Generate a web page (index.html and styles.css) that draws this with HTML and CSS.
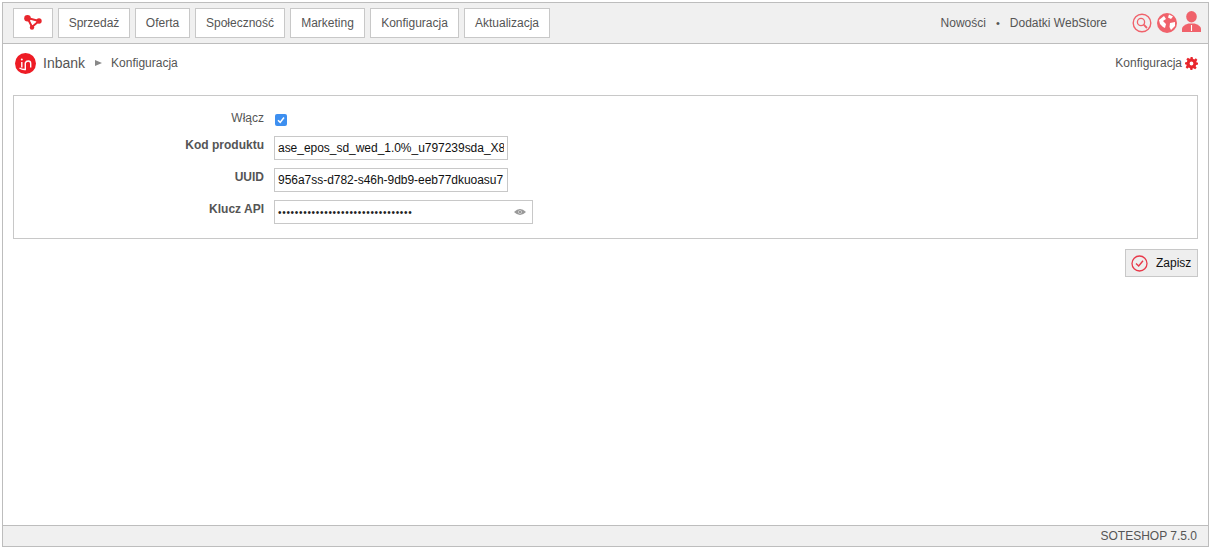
FILE: index.html
```html
<!DOCTYPE html>
<html lang="pl">
<head>
<meta charset="utf-8">
<title>Inbank - Konfiguracja</title>
<link rel="stylesheet" href="styles.css">
</head>
<body>
<div class="frame">
  <header class="topbar">
    <nav class="nav">
      <a class="nav-btn nav-logo">
        <svg width="20" height="16" viewBox="0 0 20 16"><path d="M4.500 3 L16 6 L9 12 Z" fill="none" stroke="#e8262d" stroke-width="2"/><circle cx="4.500" cy="3.300" r="3.300" fill="#e8262d"/><circle cx="16" cy="6" r="2.700" fill="#e8262d"/><circle cx="9" cy="12.500" r="2.200" fill="#e8262d"/></svg>
      </a>
      <a class="nav-btn w72">Sprzedaż</a>
      <a class="nav-btn w55">Oferta</a>
      <a class="nav-btn w90">Społeczność</a>
      <a class="nav-btn w75">Marketing</a>
      <a class="nav-btn w89">Konfiguracja</a>
      <a class="nav-btn w86">Aktualizacja</a>
    </nav>
    <div class="top-right">
      <span>Nowości</span><span class="dot">•</span><span>Dodatki WebStore</span>
      <div class="top-icons">
        <svg width="20" height="20" viewBox="0 0 20 20"><circle cx="10" cy="10" r="8.800" fill="none" stroke="#f0626b" stroke-width="1.400"/><circle cx="9" cy="9" r="3.600" fill="none" stroke="#f0626b" stroke-width="1.300"/><path d="M11.700 11.700 L15 15" stroke="#f0626b" stroke-width="1.800"/></svg>
        <svg width="20" height="20" viewBox="0 0 20 20"><circle cx="10" cy="10" r="10" fill="#f0626b"/><path d="M2 7 L7 3 L9 6 L6 8 L9 11 L8 15 L6 14 L3 11 Z M12 1.500 L16 3.500 L14 6 L11 4.500 Z M13 10 L18 9 L18 13 L14 17 L12.500 14 Z" fill="#fff"/></svg>
        <svg class="person" width="19" height="21" viewBox="0 0 19 21"><ellipse cx="9.500" cy="5.700" rx="5.300" ry="5.700" fill="#f0626b"/><path d="M0 21 L0 17.500 Q0.500 14.500 6.500 12.500 L12.500 12.500 Q18.500 14.500 19 17.500 L19 21 Z" fill="#f0626b"/><path d="M9.500 14 L9.500 20" stroke="#fff" stroke-width="1.100"/></svg>
      </div>
    </div>
  </header>

  <div class="crumbs">
    <div class="crumbs-left">
      <svg class="in-logo" width="21" height="21" viewBox="0 0 21 21"><circle cx="10.500" cy="10.500" r="10.500" fill="#ee1c25"/><path d="M6.800 9 V14.500 M4.500 15 Q7 16.800 10.300 16.500 V9.500 M10.300 10 Q11 8 13.200 8 Q15.700 8 15.700 10.500 V14.500" fill="none" stroke="#fff" stroke-width="1.400"/><circle cx="6.800" cy="6.500" r="1" fill="#fff"/></svg>
      <span class="crumb-title">Inbank</span>
      <span class="crumb-arrow"></span>
      <span class="crumb-sub">Konfiguracja</span>
    </div>
    <div class="crumbs-right">
      <span>Konfiguracja</span>
      <svg width="13" height="13" viewBox="0 0 24 24"><path fill="#e8262d" fill-rule="evenodd" d="M10 0h4l.7 3.400 2.400 1 2.900-1.900 2.800 2.800-1.900 2.900 1 2.400L24 10v4l-3.400.7-1 2.400 1.900 2.900-2.800 2.800-2.900-1.900-2.400 1L14 24h-4l-.7-3.400-2.400-1-2.900 1.900-2.800-2.800 1.900-2.900-1-2.400L0 14v-4l3.400-.7 1-2.400-1.900-2.900 2.800-2.800 2.900 1.900 2.400-1zM12 8.500a3.500 3.500 0 1 0 0 7 3.500 3.500 0 0 0 0-7z"/></svg>
    </div>
  </div>

  <main class="content">
    <form class="panel">
      <div class="row row-check">
        <label class="lbl lbl-plain">Włącz</label>
        <span class="check"><svg width="8" height="8" viewBox="0 0 8 8"><path d="M1 4.200 L3.200 6.400 L7 1.500" fill="none" stroke="#fff" stroke-width="1.500"/></svg></span>
      </div>
      <div class="row">
        <label class="lbl">Kod produktu</label>
        <input class="field" type="text" value="ase_epos_sd_wed_1.0%_u797239sda_X8">
      </div>
      <div class="row">
        <label class="lbl">UUID</label>
        <input class="field" type="text" value="956a7ss-d782-s46h-9db9-eeb77dkuoasu7">
      </div>
      <div class="row">
        <label class="lbl">Klucz API</label>
        <div class="field field-pass">
          <span class="dots">••••••••••••••••••••••••••••••••</span>
          <svg width="12" height="8" viewBox="0 0 12 8"><path d="M0 4 Q6 -2 12 4 Q6 10 0 4 Z" fill="#999"/><circle cx="6" cy="4" r="1.800" fill="#e4e4e4"/><circle cx="6" cy="4" r="1.100" fill="#888"/></svg>
        </div>
      </div>
    </form>
    <div class="actions">
      <button class="save" type="button">
        <svg width="17" height="17" viewBox="0 0 17 17"><circle cx="8.500" cy="8.500" r="7.500" fill="none" stroke="#e8394a" stroke-width="1.300"/><path d="M5 8.500 L7.700 11 L12 5.700" fill="none" stroke="#e8394a" stroke-width="1.400"/></svg>
        <span>Zapisz</span>
      </button>
    </div>
  </main>

  <footer class="footer">SOTESHOP 7.5.0</footer>
</div>
</body>
</html>
```

FILE: styles.css
```css
* { box-sizing: border-box; }
html, body { margin: 0; height: 100%; background: #fff; }
body {
  padding: 2px 2px 3px 2px;
  font-family: "Liberation Sans", Arial, sans-serif;
  font-size: 12px;
  color: #555;
}
.frame {
  height: 545px;
  border: 1px solid #bdbdbd;
  display: flex;
  flex-direction: column;
  background: #fff;
}
.topbar {
  height: 41px;
  flex: none;
  background: #f0f0f0;
  border-bottom: 1px solid #bdbdbd;
  display: flex;
  align-items: center;
  justify-content: space-between;
  padding: 0 7px 0 10px;
}
.nav { display: flex; gap: 5px; }
.nav-btn {
  height: 30px;
  background: #fff;
  border: 1px solid #c8c8c8;
  display: flex;
  align-items: center;
  justify-content: center;
  color: #555;
}
.nav-logo { width: 40px; }
.w72 { width: 72px; }
.w55 { width: 55px; }
.w90 { width: 90px; }
.w89 { width: 89px; }
.w75 { width: 75px; }
.w86 { width: 86px; }
.top-right { display: flex; align-items: center; color: #555; }
.dot { margin: 0 10px; font-size: 11px; }
.top-icons { display: flex; align-items: center; gap: 5px; margin-left: 25px; }
.person { margin-top: -4px; }
.crumbs {
  height: 38px;
  flex: none;
  display: flex;
  align-items: center;
  justify-content: space-between;
  padding: 0 10px 0 12px;
}
.crumbs-left, .crumbs-right { display: flex; align-items: center; }
.crumbs-right { gap: 3px; }
.crumb-title { font-size: 14px; margin-left: 7px; }
.crumb-arrow {
  width: 0; height: 0;
  margin: 0 9px 0 10px;
  border-left: 7px solid #888;
  border-top: 3.500px solid transparent;
  border-bottom: 3.500px solid transparent;
}
.content { flex: 1; padding: 13px 10px 0 10px; }
.panel {
  height: 144px;
  border: 1px solid #c8c8c8;
  padding: 14px 0 0 0;
}
.row { display: flex; align-items: flex-start; height: 32px; }
.row-check { height: 26px; }
.lbl {
  width: 250px;
  text-align: right;
  font-weight: bold;
  margin-right: 10px;
  line-height: 14px;
  padding-top: 2px;
}
.lbl-plain { font-weight: normal; padding-top: 1px; }
.check {
  width: 12px; height: 12px;
  margin-left: 1px;
  margin-top: 4px;
  border-radius: 2px;
  background: #3d8ff0;
  display: flex;
  align-items: center;
  justify-content: center;
}
.field {
  width: 234px;
  height: 24px;
  border: 1px solid #c8c8c8;
  background: #fff;
  padding: 0 3px;
  font: 12px "Liberation Sans", Arial, sans-serif;
  letter-spacing: -0.03px;
  color: #111;
  outline: none;
}
.field-pass {
  width: 259px;
  display: flex;
  align-items: center;
  justify-content: space-between;
  padding-right: 6px;
}
.dots { font-size: 10px; letter-spacing: 0.7px; color: #222; }
.actions { display: flex; justify-content: flex-end; padding-top: 10px; }
.save {
  width: 73px;
  height: 28px;
  background: #eee;
  border: 1px solid #c8c8c8;
  display: flex;
  align-items: center;
  gap: 8px;
  padding: 0 0 0 5px;
  font: 12px "Liberation Sans", Arial, sans-serif;
  color: #111;
}
.footer {
  height: 21px;
  flex: none;
  background: #f0f0f0;
  border-top: 1px solid #bdbdbd;
  display: flex;
  align-items: center;
  justify-content: flex-end;
  padding-right: 11px;
  color: #555;
}
```
